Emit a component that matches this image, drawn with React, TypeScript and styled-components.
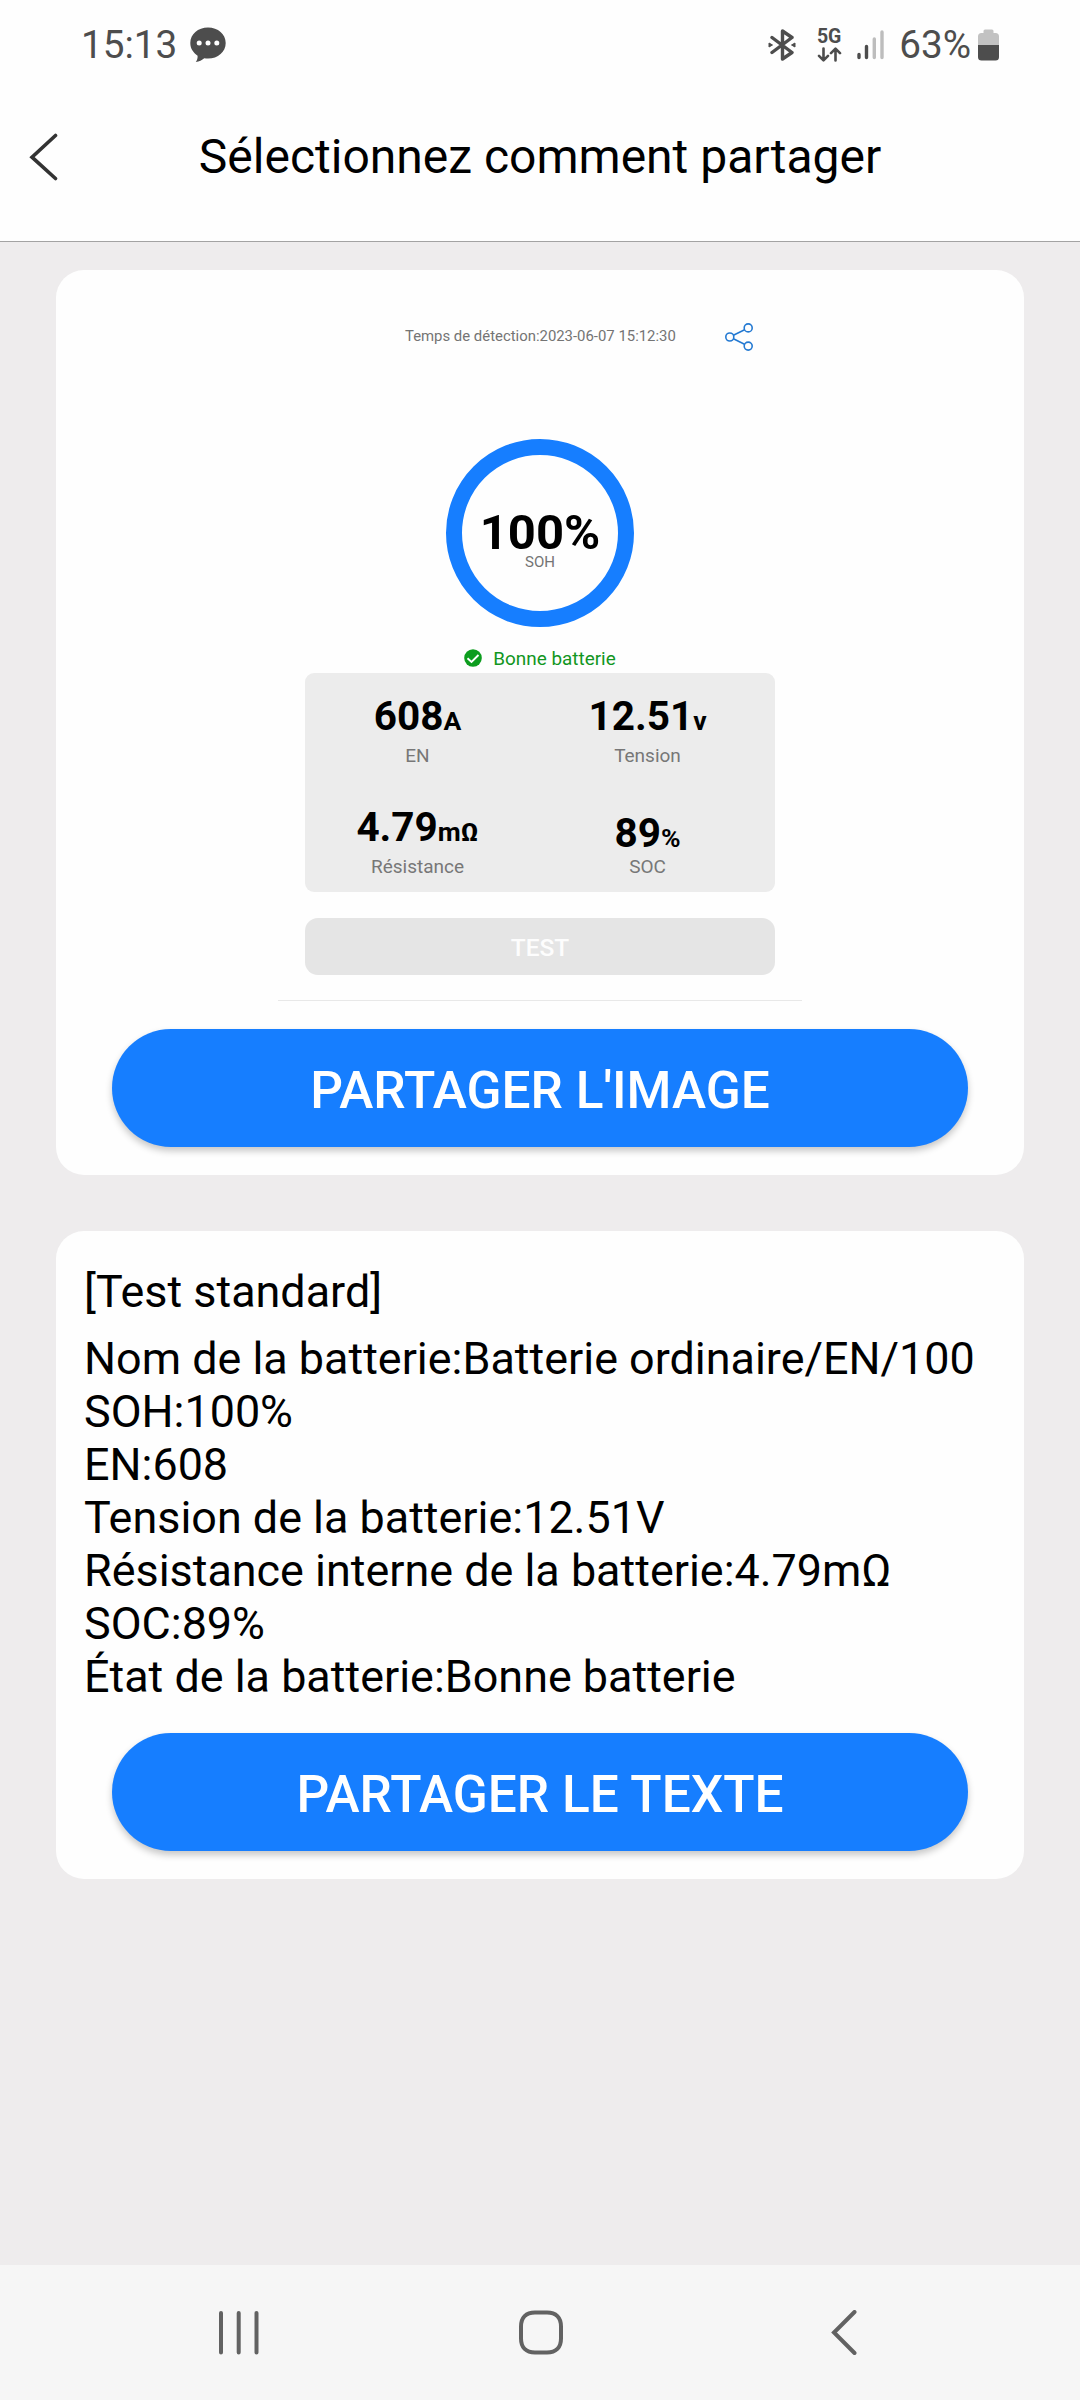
import React from "react";
import styled, { createGlobalStyle } from "styled-components";

const BLUE = "#167eff";
const INK = "#4d4d4d";
const NAV_INK = "#626262";

const Global = createGlobalStyle`
  *, *::before, *::after { box-sizing: border-box; }
  body { margin: 0; background: #eeeced; font-family: Roboto, "Liberation Sans", sans-serif; }
  svg { display: block; flex: none; }
`;

const Screen = styled.div`
  width: 1080px;
  height: 2400px;
  display: flex;
  flex-direction: column;
  background: #eeeced;
  color: #000;
`;

const StatusBar = styled.div`
  height: 73px;
  padding: 16px 81px 0;
  display: flex;
  align-items: center;
  justify-content: space-between;
  background: #fefefe;
  color: ${INK};
`;

const StatusGroup = styled.div<{ $gap: number }>`
  display: flex;
  align-items: center;
  gap: ${(p) => p.$gap}px;
`;

const StatusText = styled.span`
  font-size: 38.7px;
  line-height: 44px;
`;

const NetworkType = styled.div`
  display: flex;
  flex-direction: column;
  align-items: center;
  gap: 3px;
  width: 26px;
  padding-top: 1px;
  font-size: 19.5px;
  font-weight: 700;
  line-height: 15px;
`;

const Header = styled.header`
  height: 169px;
  display: grid;
  grid-template-columns: 120px 1fr 120px;
  align-items: center;
  background: #fefefe;
  border-bottom: 1px solid #a3a3a3;
`;

const BackButton = styled.button`
  border: 0;
  padding: 0 0 0 29px;
  background: none;
`;

const Title = styled.h1`
  margin: 0;
  font-size: 48px;
  line-height: 56px;
  font-weight: 400;
  text-align: center;
  white-space: nowrap;
`;

const Body = styled.main`
  flex: 1;
  display: flex;
  flex-direction: column;
  gap: 56px;
  padding: 28px 56px 0;
`;

const Card = styled.section<{ $top: number }>`
  display: flex;
  flex-direction: column;
  padding: ${(p) => p.$top}px 28px 28px;
  border-radius: 28px;
  background: #fefefe;
`;

const ShareButton = styled.button<{ $top: number }>`
  height: 118px;
  margin: ${(p) => p.$top}px 28px 0;
  padding: 6px 0 0;
  border: 0;
  border-radius: 59px;
  background: ${BLUE};
  color: #fff;
  font-family: inherit;
  font-size: 51.4px;
  font-weight: 500;
  line-height: 60px;
  box-shadow: 0 4px 7px rgba(0, 0, 0, 0.22);
`;

const Preview = styled.div`
  width: 526px;
  margin: 0 auto;
  display: flex;
  flex-direction: column;
`;

const PreviewTop = styled.div`
  height: 41px;
  display: flex;
  align-items: center;
  gap: 49px;
  padding-left: 128px;
  color: #747474;
  font-size: 14.9px;
  line-height: 18px;
  white-space: nowrap;
`;

const DetectionTime = styled.span`
  padding-bottom: 1px;
`;

const Ring = styled.div`
  width: 188px;
  height: 188px;
  margin: 82px auto 0;
  padding-top: 58px;
  border: 16px solid ${BLUE};
  border-radius: 50%;
  text-align: center;
`;

const RingValue = styled.div`
  font-size: 49px;
  font-weight: 700;
  line-height: 40px;
`;

const RingLabel = styled.div`
  color: #747474;
  font-size: 15px;
  line-height: 19px;
`;

const Verdict = styled.div`
  display: flex;
  align-items: center;
  justify-content: center;
  gap: 11px;
  height: 24px;
  margin: 19px 0 3px;
  color: #12961f;
  font-size: 18.9px;
`;

const Metrics = styled.div`
  display: grid;
  grid-template-columns: 225px 235px;
  grid-auto-rows: 111px;
  height: 219px;
  margin: 0 28px;
  padding-top: 21px;
  border-radius: 9px;
  background: #ececec;
`;

const Metric = styled.div`
  text-align: center;
`;

const MetricValue = styled.div<{ $drop: number }>`
  height: 49px;
  padding-top: ${(p) => p.$drop}px;
  font-size: 40.5px;
  font-weight: 700;
  line-height: 45px;
`;

const Unit = styled.span`
  font-size: 26.5px;
  line-height: 1;
`;

const MetricLabel = styled.div`
  color: #777;
  font-size: 19px;
  line-height: 25px;
`;

const TestButton = styled.button`
  height: 57px;
  margin: 26px 28px 25px;
  padding: 2px 0 0;
  border: 0;
  border-radius: 13px;
  background: #e5e5e5;
  color: #fdfdfd;
  font-family: inherit;
  font-size: 24.5px;
  font-weight: 500;
`;

const Divider = styled.hr`
  width: 524px;
  height: 1px;
  margin: 0 auto;
  border: 0;
  background: #e8e8e8;
`;

const ReportTitle = styled.h2`
  margin: 0 0 14px;
  font-size: 44.9px;
  font-weight: 400;
  line-height: 53px;
`;

const ReportLine = styled.p`
  margin: 0;
  font-size: 44.9px;
  line-height: 53px;
  white-space: nowrap;
`;

const NavBar = styled.nav`
  height: 135px;
  display: flex;
  align-items: center;
  background: #f6f6f6;
`;

const NavButton = styled.button<{ $before: number }>`
  margin: 0 0 0 ${(p) => p.$before}px;
  padding: 0;
  border: 0;
  background: none;
`;

const metrics = [
  { value: "608", unit: "A", label: "EN", drop: 0 },
  { value: "12.51", unit: "v", label: "Tension", drop: 0 },
  { value: "4.79", unit: "mΩ", label: "Résistance", drop: 0 },
  { value: "89", unit: "%", label: "SOC", drop: 5.5 },
];

const report = [
  "Nom de la batterie:Batterie ordinaire/EN/100",
  "SOH:100%",
  "EN:608",
  "Tension de la batterie:12.51V",
  "Résistance interne de la batterie:4.79mΩ",
  "SOC:89%",
  "État de la batterie:Bonne batterie",
];

const ChatIcon = () => (
  <svg width="36" height="36" viewBox="0 0 36 36">
    <path
      d="M18 .5C8 .5.3 7.2.3 16c0 5.500 3 9.700 7.300 12.700.2 2.500-.6 4.500-1.800 6.300 3.500-.3 6.200-1.800 8.500-3.700 1.200.2 2.400.3 3.700.3 10 0 17.700-6.800 17.700-15.600S28 .5 18 .5Z"
      fill={INK}
    />
    <circle cx="9.200" cy="16" r="2.500" fill="#fff" />
    <circle cx="18" cy="16" r="2.500" fill="#fff" />
    <circle cx="26.800" cy="16" r="2.500" fill="#fff" />
  </svg>
);

const BluetoothIcon = () => (
  <svg width="28" height="32" viewBox="0 0 28 32">
    <path
      d="M4 8.500 24 23.500 14.500 30V2L24 8.500 4 23.500"
      fill="none"
      stroke={INK}
      strokeWidth="3.400"
      strokeLinecap="round"
      strokeLinejoin="round"
    />
    <path d="M1 14 4.500 16 1 18ZM27 14 23.500 16 27 18Z" fill={INK} stroke={INK} strokeLinejoin="round" />
  </svg>
);

const DataArrows = () => (
  <svg width="25" height="15" viewBox="0 0 25 15">
    <path
      d="M6.500 1.500V13M2 8.800 6.500 13.300 11 8.800M18.500 13.500V2M14 6.200 18.500 1.700 23 6.200"
      fill="none"
      stroke={INK}
      strokeWidth="2.600"
      strokeLinecap="round"
      strokeLinejoin="round"
    />
  </svg>
);

const SignalIcon = () => (
  <svg width="27" height="30" viewBox="0 0 27 30" strokeWidth="3.400" strokeLinecap="round">
    <path d="M2 24.500V27.500M9.500 16.500V27.500" stroke={INK} />
    <path d="M17.300 9V27.500M25 2V27.500" stroke="#bdbdbd" />
  </svg>
);

const BatteryIcon = () => (
  <svg width="21" height="32" viewBox="0 0 21 32">
    <path d="M0 16V7.500Q0 4 3.500 4H5.500V2Q5.500 .5 7 .5H14Q15.500 .5 15.500 2V4H17.500Q21 4 21 7.500V16Z" fill="#c2c2c2" />
    <path d="M0 16H21V28Q21 31.500 17.500 31.500H3.500Q0 31.500 0 28Z" fill={INK} />
  </svg>
);

const ShareIcon = () => (
  <svg width="28" height="28" viewBox="0 0 28 28" fill="none" stroke="#2379d2" strokeWidth="1.600">
    <circle cx="4.800" cy="14" r="4" />
    <circle cx="23.200" cy="4.900" r="4" />
    <circle cx="23.200" cy="23.100" r="4" />
    <path d="M8.400 12.200 19.600 6.700M8.400 15.700 19.500 21.300" />
  </svg>
);

const CheckIcon = () => (
  <svg width="18" height="18" viewBox="0 0 18 18">
    <circle cx="9" cy="9" r="8.800" fill="#0c9d1e" />
    <path d="M3.500 9.300 7.500 13 14.500 6" fill="none" stroke="#fff" strokeWidth="1.900" />
  </svg>
);

export default function App() {
  return (
    <Screen>
      <Global />
      <StatusBar>
        <StatusGroup $gap={13}>
          <StatusText>15:13</StatusText>
          <ChatIcon />
        </StatusGroup>
        <StatusGroup $gap={15}>
          <StatusGroup $gap={20}>
            <BluetoothIcon />
            <NetworkType>
              5G
              <DataArrows />
            </NetworkType>
          </StatusGroup>
          <SignalIcon />
          <StatusGroup $gap={7}>
            <StatusText>63%</StatusText>
            <BatteryIcon />
          </StatusGroup>
        </StatusGroup>
      </StatusBar>

      <Header>
        <BackButton aria-label="Retour">
          <svg width="30" height="48" viewBox="0 0 30 48">
            <path d="M26.500 2.500 3 24.200 26.500 45.500" fill="none" stroke="#333" strokeWidth="3.600" strokeLinecap="round" />
          </svg>
        </BackButton>
        <Title>Sélectionnez comment partager</Title>
      </Header>

      <Body>
        <Card $top={46}>
          <Preview>
            <PreviewTop>
              <DetectionTime>Temps de détection:2023-06-07 15:12:30</DetectionTime>
              <ShareIcon />
            </PreviewTop>
            <Ring>
              <RingValue>100%</RingValue>
              <RingLabel>SOH</RingLabel>
            </Ring>
            <Verdict>
              <CheckIcon />
              <span>Bonne batterie</span>
            </Verdict>
            <Metrics>
              {metrics.map((m) => (
                <Metric key={m.label}>
                  <MetricValue $drop={m.drop}>
                    {m.value}
                    <Unit>{m.unit}</Unit>
                  </MetricValue>
                  <MetricLabel>{m.label}</MetricLabel>
                </Metric>
              ))}
            </Metrics>
            <TestButton>TEST</TestButton>
            <Divider />
          </Preview>
          <ShareButton $top={28}>PARTAGER L'IMAGE</ShareButton>
        </Card>

        <Card $top={34}>
          <ReportTitle>[Test standard]</ReportTitle>
          {report.map((line) => (
            <ReportLine key={line}>{line}</ReportLine>
          ))}
          <ShareButton $top={30}>PARTAGER LE TEXTE</ShareButton>
        </Card>
      </Body>

      <NavBar>
        <NavButton $before={217} aria-label="Applications récentes">
          <svg width="44" height="46" viewBox="0 0 44 46">
            <path d="M4 3V42.500M21.700 3V42.500M39.500 3V42.500" stroke={NAV_INK} strokeWidth="4" strokeLinecap="round" />
          </svg>
        </NavButton>
        <NavButton $before={257} aria-label="Accueil">
          <svg width="46" height="46" viewBox="0 0 46 46">
            <path
              d="M17 2.500H29C38 2.500 43 7.500 43 16.500V28.500C43 37.500 38 42.500 29 42.500H17C8 42.500 3 37.500 3 28.500V16.500C3 7.500 8 2.500 17 2.500Z"
              fill="none"
              stroke={NAV_INK}
              strokeWidth="4"
            />
          </svg>
        </NavButton>
        <NavButton $before={266} aria-label="Précédent">
          <svg width="28" height="46" viewBox="0 0 28 46">
            <path d="M24.500 2 4 22.500 24.500 43" fill="none" stroke={NAV_INK} strokeWidth="4" strokeLinecap="round" />
          </svg>
        </NavButton>
      </NavBar>
    </Screen>
  );
}
